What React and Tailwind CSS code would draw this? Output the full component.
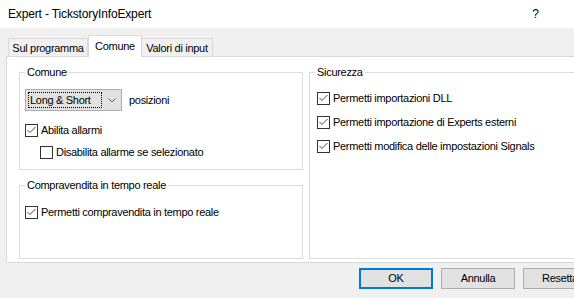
import React from 'react';

const font = { fontFamily: '"Liberation Sans", Arial, sans-serif' };

function Check({ checked }) {
  return (
    <span className="w-[13px] h-[13px] border border-[#333333] bg-white flex items-center justify-center shrink-0">
      {checked && (
        <svg width="11" height="11" viewBox="0 0 11 11">
          <path d="M1.5 5 L4 7.5 L9.5 2" fill="none" stroke="#444444" strokeWidth="1" />
        </svg>
      )}
    </span>
  );
}

function Row({ checked, label, className = '' }) {
  return (
    <div className={`flex items-center gap-[3px] h-[13px] ${className}`}>
      <Check checked={checked} />
      <span className="text-[11px] tracking-[-0.3px] leading-[13px] text-black">{label}</span>
    </div>
  );
}

function Group({ title, className = '', children }) {
  return (
    <div className={`relative border border-[#dcdcdc] ${className}`}>
      <span className="absolute left-[5px] top-[-7px] px-[2px] bg-white text-[11px] tracking-[-0.3px] leading-[13px] text-black">
        {title}
      </span>
      {children}
    </div>
  );
}

export default function App() {
  return (
    <div className="w-[574px] h-[298px] bg-[#f0f0f0] overflow-hidden" style={font}>
      {/* barra titolo */}
      <div className="h-[28px] bg-white flex items-center pl-[8px] pr-[35px]">
        <span className="text-[12px] tracking-[-0.15px] text-black">Expert - TickstoryInfoExpert</span>
        <span className="ml-auto text-[12px] text-black">?</span>
      </div>

      {/* schede */}
      <div className="h-[28px] flex items-end pl-[8px]">
        <div className="w-[80px] h-[18px] border border-b-0 border-[#d9d9d9] bg-[#f0f0f0] flex justify-center pt-[3px] text-[11px] tracking-[-0.3px] leading-[13px]">
          Sul programma
        </div>
        <div className="relative z-10 mb-[-1px] w-[54px] h-[22px] border border-b-0 border-[#d9d9d9] bg-white flex justify-center pt-[4px] text-[11px] tracking-[-0.3px] leading-[13px]">
          Comune
        </div>
        <div className="w-[71px] h-[18px] border border-b-0 border-l-0 border-[#d9d9d9] bg-[#f0f0f0] flex justify-center pt-[3px] text-[11px] tracking-[-0.3px] leading-[13px]">
          Valori di input
        </div>
      </div>

      {/* pannello */}
      <div className="ml-[6px] w-[600px] h-[207px] border border-[#d9d9d9] bg-white flex gap-[6px] pl-[12px] pt-[15px] pb-[3px]">
        <div className="w-[284px] flex flex-col gap-[15px]">
          <Group title="Comune" className="h-[98px] pl-[5px] pt-[16px]">
            <div className="flex items-center">
              <div className="w-[97px] h-[22px] bg-[#e1e1e1] border border-[#adadad] flex items-center pl-[2px] pr-[5px]">
                <span className="border border-dotted border-black px-[1px] w-[74px] h-[16px] text-[11px] tracking-[-0.3px] leading-[14px] text-black">
                  Long &amp; Short
                </span>
                <svg className="ml-auto" width="8" height="5" viewBox="0 0 8 5">
                  <path d="M0.5 0.5 L4 4 L7.5 0.5" fill="none" stroke="#606060" strokeWidth="1" />
                </svg>
              </div>
              <span className="ml-[7px] text-[11px] tracking-[-0.3px] text-black">posizioni</span>
            </div>
            <Row checked label="Abilita allarmi" className="mt-[13px]" />
            <Row label="Disabilita allarme se selezionato" className="mt-[9px] ml-[15px]" />
          </Group>
          <Group title="Compravendita in tempo reale" className="h-[74px] pl-[5px] pt-[20px]">
            <Row checked label="Permetti compravendita in tempo reale" />
          </Group>
        </div>
        <Group title="Sicurezza" className="flex-1 mr-[8px] pl-[7px] pt-[19px] flex flex-col gap-[11px]">
          <Row checked label="Permetti importazioni DLL" />
          <Row checked label="Permetti importazione di Experts esterni" />
          <Row checked label="Permetti modifica delle impostazioni Signals" />
        </Group>
      </div>

      {/* pulsanti */}
      <div className="w-max flex gap-[8px] pl-[359px] mt-[5px]">
        <button className="w-[74px] h-[21px] shrink-0 bg-[#e1e1e1] border-2 border-[#0078d7] text-[11px] tracking-[-0.3px] text-black">
          OK
        </button>
        <button className="w-[74px] h-[21px] shrink-0 bg-[#e1e1e1] border border-[#adadad] text-[11px] tracking-[-0.3px] text-black">
          Annulla
        </button>
        <button className="w-[74px] h-[21px] shrink-0 bg-[#e1e1e1] border border-[#adadad] text-[11px] tracking-[-0.3px] text-black">
          Resetta
        </button>
      </div>
    </div>
  );
}
